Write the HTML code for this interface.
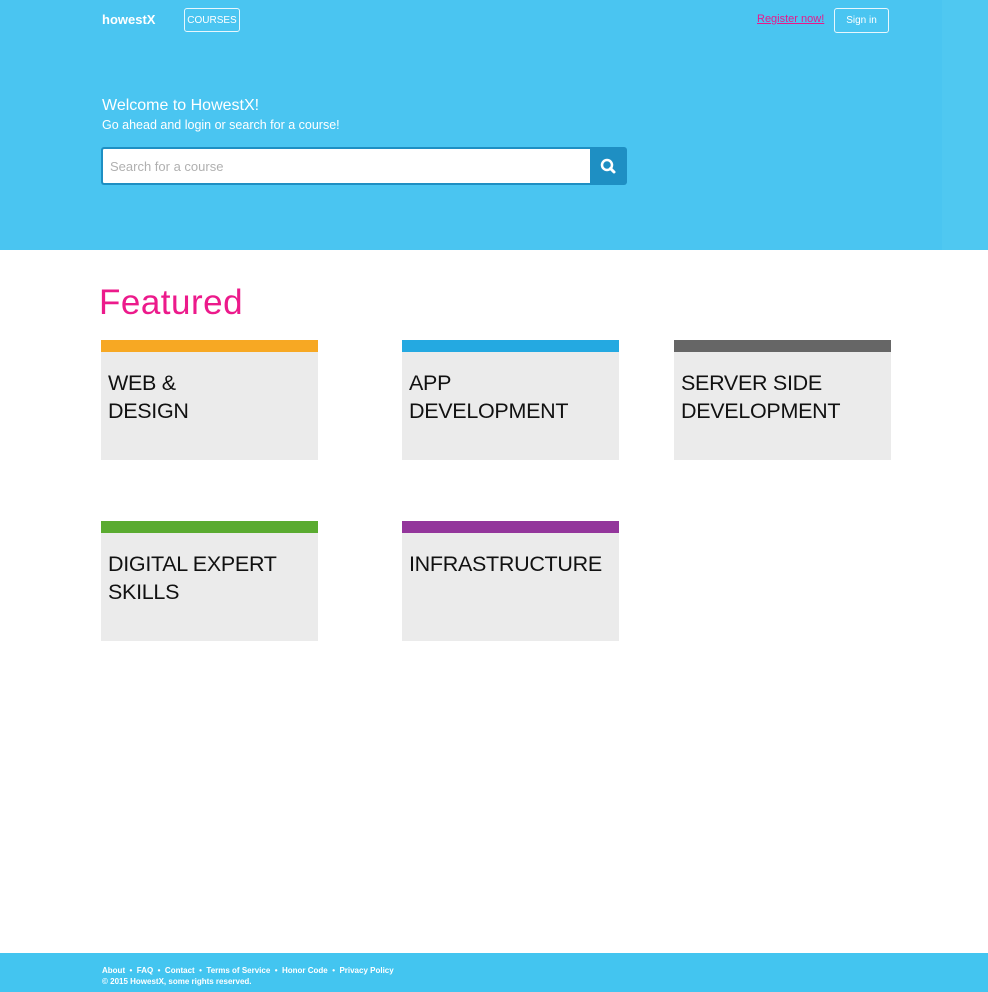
<!DOCTYPE html>
<html><head><meta charset="utf-8"><style>
*{margin:0;padding:0;box-sizing:border-box}
body{width:988px;height:992px;position:relative;background:#fff;font-family:"Liberation Sans",sans-serif;overflow:hidden}
.hero{position:absolute;left:0;top:0;width:988px;height:250px;background:#4ac5f1}
.strip{position:absolute;left:942px;top:0;width:46px;height:250px;background:#4fc8f1}
.logo{position:absolute;left:102px;top:12px;color:#fff;font-weight:bold;font-size:13px}
.btn{position:absolute;border:1px solid #e8f7fd;border-radius:3px;color:#fff;font-size:10px;text-align:center}
.reg{position:absolute;left:757px;top:13px;color:#e8198b;font-size:11px;text-decoration:underline}
.h1{position:absolute;left:102px;top:97px;color:#fff;font-size:16px}
.h2{position:absolute;left:102px;top:118px;color:#fff;font-size:12.5px}
.search{position:absolute;left:101px;top:147px;width:490px;height:38px;background:#fff;border:2px solid #1e8fc3;border-right:none;border-radius:3px 0 0 3px;color:#b0b0b0;font-size:13px;padding:10px 7px}
.sbtn{position:absolute;left:590px;top:147px;width:37px;height:38px;background:#1e8fc3;border-radius:0 3px 3px 0}
.feat{position:absolute;left:99px;top:283px;color:#ec1a8b;font-size:35px;letter-spacing:0.5px}
.card{position:absolute;width:217px;height:120px;background:#ebebeb;border-top:12px solid;padding:17px 7px;font-size:21.5px;line-height:28px;color:#111;letter-spacing:-0.3px}
.foot{position:absolute;left:0;top:953px;width:988px;height:39px;background:#43c5f0;color:#fff;font-size:8px;font-weight:bold;padding:12px 102px;line-height:11px}
</style></head><body>
<div class="hero"></div><div class="strip"></div>
<div class="logo">howestX</div>
<div class="btn" style="left:184px;top:8px;width:56px;height:24px;line-height:23px">COURSES</div>
<div class="reg">Register now!</div>
<div class="btn" style="left:834px;top:8px;width:55px;height:25px;line-height:24px">Sign in</div>
<div class="h1">Welcome to HowestX!</div>
<div class="h2">Go ahead and login or search for a course!</div>
<div class="search">Search for a course</div>
<div class="sbtn"><svg width="37" height="38" viewBox="0 0 37 38"><circle cx="17" cy="18" r="5" fill="none" stroke="#fff" stroke-width="2.5"/><line x1="20.5" y1="21.5" x2="24" y2="25" stroke="#fff" stroke-width="3" stroke-linecap="round"/></svg></div>
<div class="feat">Featured</div>
<div class="card" style="left:101px;top:340px;border-color:#f7a823">WEB &amp;<br>DESIGN</div>
<div class="card" style="left:402px;top:340px;border-color:#24a9e1">APP<br>DEVELOPMENT</div>
<div class="card" style="left:674px;top:340px;border-color:#666">SERVER SIDE<br>DEVELOPMENT</div>
<div class="card" style="left:101px;top:521px;border-color:#5aab30">DIGITAL EXPERT<br>SKILLS</div>
<div class="card" style="left:402px;top:521px;border-color:#93359b">INFRASTRUCTURE</div>
<div class="foot">About &nbsp;•&nbsp; FAQ &nbsp;•&nbsp; Contact &nbsp;•&nbsp; Terms of Service &nbsp;•&nbsp; Honor Code &nbsp;•&nbsp; Privacy Policy<br>© 2015 HowestX, some rights reserved.</div>
</body></html>
